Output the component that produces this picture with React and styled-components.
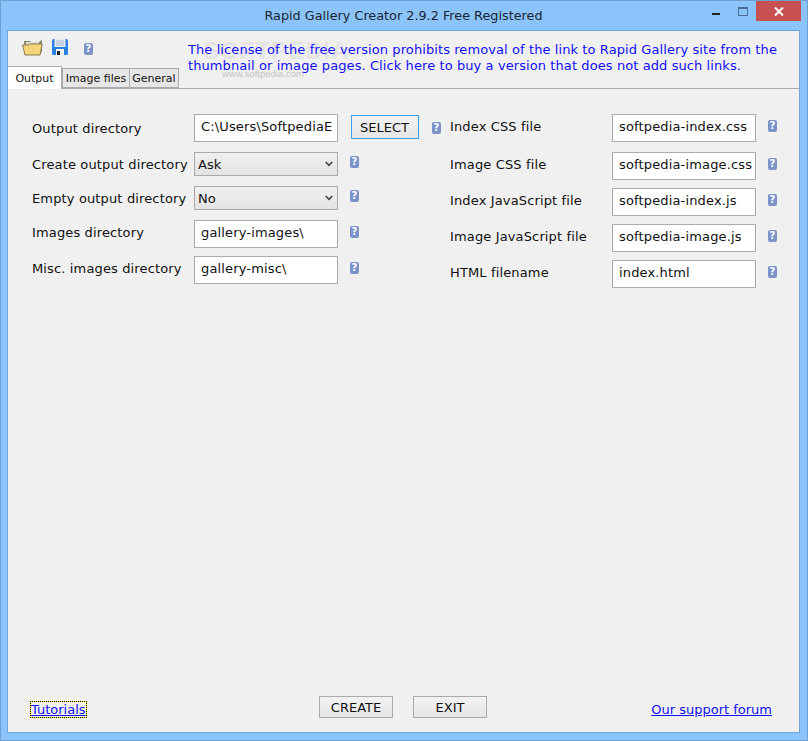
import styled, { createGlobalStyle } from "styled-components";

const GlobalStyle = createGlobalStyle`
    html, body {
        margin: 0;
        padding: 0;
        background: #8ac4fb;
    }
    * {
        box-sizing: border-box;
    }
`;

const Window = styled.div`
    width: 808px;
    height: 741px;
    display: flex;
    flex-direction: column;
    background: #8ac4fb;
    border: 1px solid #6f9fcf;
    padding: 0 7px 7px 6px;
    font-family: "DejaVu Sans", Verdana, sans-serif;
    font-size: 13px;
    color: #111;
    overflow: hidden;
`;

const TitleBar = styled.div`
    height: 29px;
    flex: none;
    position: relative;
    display: flex;
    align-items: center;
    justify-content: center;
    font-size: 12.8px;
    color: #1c2430;
`;

const Controls = styled.div`
    position: absolute;
    right: -1px;
    top: 0;
    display: flex;
    align-items: flex-start;
`;

const MinButton = styled.div`
    width: 8px;
    height: 2px;
    margin: 12px 18px 0 0;
    background: #222;
`;

const MaxButton = styled.div`
    width: 10px;
    height: 9px;
    margin: 6px 8px 0 0;
    border: 1px solid #4d6f93;
    border-top-width: 2px;
`;

const CloseButton = styled.div`
    width: 45px;
    height: 20px;
    background: #c75050;
    display: flex;
    align-items: center;
    justify-content: center;
`;

const Client = styled.div`
    flex: 1;
    position: relative;
    display: flex;
    flex-direction: column;
    background: #f0f0f0;
    border: 1px solid #6fa5d8;
`;

const Header = styled.div`
    height: 36px;
    flex: none;
    display: flex;
    position: relative;
`;

const Toolbar = styled.div`
    width: 180px;
    flex: none;
    display: flex;
    align-items: center;
    padding: 0 0 4px 14px;
`;

const ToolIcon = styled.svg`
    display: block;
    flex: none;
    margin-left: ${p => p.$left || 0}px;
`;

const Notice = styled.div`
    position: relative;
    color: #1010f5;
    font-size: 13px;
    line-height: 16px;
    letter-spacing: 0.09px;
    white-space: nowrap;
    padding-top: 11px;
`;

const WatermarkLogo = styled.div`
    position: absolute;
    left: 195px;
    top: 6px;
    color: #e4e4e4;
    font-family: "Liberation Sans", Arial, sans-serif;
    font-size: 24px;
    font-weight: bold;
    letter-spacing: 1px;
    pointer-events: none;
`;

const WatermarkUrl = styled.div`
    position: absolute;
    left: 214px;
    top: 37px;
    color: #c4c4c4;
    font-family: "Liberation Sans", Arial, sans-serif;
    font-size: 9.5px;
    pointer-events: none;
`;

const TabBar = styled.div`
    display: flex;
    height: 22px;
    flex: none;
    align-items: flex-end;
    border-bottom: 1px solid #aaaaaa;
    font-size: 11px;
`;

const Tab = styled.div`
    height: ${p => (p.$active ? "23px" : "20px")};
    width: ${p => p.$width}px;
    display: flex;
    align-items: center;
    justify-content: center;
    border: 1px solid #aaaaaa;
    border-left-width: ${p => (p.$active ? "0" : "1px")};
    border-bottom: ${p => (p.$active ? "none" : "1px solid #aaaaaa")};
    background: ${p => (p.$active ? "#ffffff" : "#e6e6e6")};
    margin-bottom: ${p => (p.$active ? "-1px" : "0")};
    margin-left: ${p => (p.$overlap ? "-1px" : "0")};
    position: relative;
`;

const Panel = styled.div`
    flex: 1;
    display: flex;
    flex-direction: column;
    justify-content: space-between;
    padding: 25px 22px 14px 24px;
`;

const Columns = styled.div`
    display: flex;
`;

const LeftColumn = styled.div`
    width: 418px;
    flex: none;
`;

const RightColumn = styled.div`
    flex: 1;
`;

const Row = styled.div`
    display: flex;
    align-items: center;
    margin-top: ${p => p.$gap || 0}px;
`;

const Label = styled.div`
    width: 162px;
    flex: none;
    white-space: nowrap;
    letter-spacing: 0.14px;
    margin-top: ${p => (p.$raised ? "-4px" : "0")};
`;

const TextField = styled.div`
    width: 144px;
    height: 28px;
    flex: none;
    background: #fff;
    border: 1px solid #aaaaaa;
    padding: 0 0 3px 6px;
    display: flex;
    align-items: center;
    white-space: nowrap;
    overflow: hidden;
    letter-spacing: 0.15px;
`;

const Select = styled.div`
    width: 144px;
    height: 24px;
    flex: none;
    border: 1px solid #aaaaaa;
    background: linear-gradient(#f0f0f0, #e3e3e3);
    padding: 0 4px 0 3px;
    display: flex;
    align-items: center;
    justify-content: space-between;
`;

const Help = styled.span`
    width: 9px;
    height: 12px;
    flex: none;
    margin-left: ${p => p.$left || 12}px;
    margin-top: ${p => p.$top || 0}px;
    border-radius: 2px;
    background: #7b93c8;
    color: #fff;
    font-size: 10px;
    font-weight: bold;
    line-height: 12px;
    text-align: center;
`;

const SelectButton = styled.div`
    width: 68px;
    height: 24px;
    flex: none;
    margin: -2px 0 0 13px;
    border: 1px solid #3c9cf0;
    background: linear-gradient(#f2f2f2, #e6e6e6);
    display: flex;
    align-items: center;
    justify-content: center;
    padding-right: 1px;
`;

const Footer = styled.div`
    display: grid;
    grid-template-columns: 287px 168px 1fr;
    align-items: center;
`;

const LinkText = styled.a`
    color: #1010f5;
    text-decoration: underline;
    justify-self: end;
    margin-right: 5px;
    white-space: nowrap;
    padding-top: 4px;
`;

const FocusLink = styled.a`
    justify-self: start;
    color: #1010f5;
    text-decoration: underline;
    white-space: nowrap;
    margin: 4px 0 0 -1px;
    outline: 1px dotted #000;
    box-shadow: 0 0 0 1px #ffff00;
`;

const Actions = styled.div`
    display: flex;
    gap: 20px;
`;

const ActionButton = styled.div`
    width: 74px;
    height: 22px;
    border: 1px solid #aaaaaa;
    background: linear-gradient(#f2f2f2, #e6e6e6);
    display: flex;
    align-items: center;
    justify-content: center;
`;

const Chevron = () => (
    <svg width="8" height="6" viewBox="0 0 8 6">
        <path d="M.7 1l3.3 3.3L7.3 1" fill="none" stroke="#444" strokeWidth="1.6" />
    </svg>
);

const FolderIcon = () => (
    <ToolIcon width="21" height="17" viewBox="0 0 21 17">
        <path d="M2 2h6l1 1h8l3-2v11l-2 4H3z" fill="#857f66" />
        <path d="M4 3h13v4H4z" fill="#dedccb" />
        <path d="M.6 6h6l1-1h12.6L18 16H3z" fill="#f6d57a" stroke="#8a7a50" strokeWidth="1" />
    </ToolIcon>
);

const SaveIcon = () => (
    <ToolIcon $left={9} width="16" height="16" viewBox="0 0 16 16">
        <rect x="0" y="0" width="16" height="16" rx="1.5" fill="#2c7fe6" />
        <rect x="2.5" y="0" width="11" height="8" fill="#e4e9f2" />
        <path d="M4 2h8M4 4h8M4 6h8" stroke="#a9bcd8" strokeWidth="1" />
        <rect x="4" y="10" width="8" height="6" fill="#f3f3f3" />
        <rect x="5" y="12" width="3" height="4" fill="#222" />
    </ToolIcon>
);

const CloseIcon = () => (
    <svg width="10" height="9" viewBox="0 0 10 9">
        <path d="M1 .5l8 8M9 .5l-8 8" stroke="#fff" strokeWidth="2" />
    </svg>
);

const leftRows = [
    { label: "Create output directory", select: "Ask", gap: 10 },
    { label: "Empty output directory", select: "No", gap: 10 },
    { label: "Images directory", value: "gallery-images\\", gap: 10 },
    { label: "Misc. images directory", value: "gallery-misc\\", gap: 8 },
];

const rightRows = [
    { label: "Index CSS file", value: "softpedia-index.css", gap: 0 },
    { label: "Image CSS file", value: "softpedia-image.css", gap: 10 },
    { label: "Index JavaScript file", value: "softpedia-index.js", gap: 8 },
    { label: "Image JavaScript file", value: "softpedia-image.js", gap: 8 },
    { label: "HTML filename", value: "index.html", gap: 8 },
];

export default function App() {
    return (
        <Window>
            <GlobalStyle />
            <TitleBar>
                Rapid Gallery Creator 2.9.2 Free Registered
                <Controls>
                    <MinButton />
                    <MaxButton />
                    <CloseButton><CloseIcon /></CloseButton>
                </Controls>
            </TitleBar>
            <Client>
                <Header>
                    <WatermarkLogo>SOFTPEDIA</WatermarkLogo>
                    <WatermarkUrl>www.softpedia.com</WatermarkUrl>
                    <Toolbar>
                        <FolderIcon />
                        <SaveIcon />
                        <Help $left={16} $top={4}>?</Help>
                    </Toolbar>
                    <Notice>
                        The license of the free version prohibits removal of the link to Rapid Gallery site from the<br />
                        thumbnail or image pages. Click here to buy a version that does not add such links.
                    </Notice>
                </Header>
                <TabBar>
                    <Tab $active $width={54}>Output</Tab>
                    <Tab $width={68}>Image files</Tab>
                    <Tab $width={50} $overlap>General</Tab>
                </TabBar>
                <Panel>
                    <Columns>
                        <LeftColumn>
                            <Row>
                                <Label>Output directory</Label>
                                <TextField>C:\Users\SoftpediaE</TextField>
                                <SelectButton>SELECT</SelectButton>
                                <Help $left={13}>?</Help>
                            </Row>
                            {leftRows.map(row => (
                                <Row key={row.label} $gap={row.gap}>
                                    <Label $raised={!row.select}>{row.label}</Label>
                                    {row.select ? (
                                        <Select>{row.select}<Chevron /></Select>
                                    ) : (
                                        <TextField>{row.value}</TextField>
                                    )}
                                    <Help $top={-4}>?</Help>
                                </Row>
                            ))}
                        </LeftColumn>
                        <RightColumn>
                            {rightRows.map(row => (
                                <Row key={row.label} $gap={row.gap}>
                                    <Label $raised>{row.label}</Label>
                                    <TextField>{row.value}</TextField>
                                    <Help $top={-4}>?</Help>
                                </Row>
                            ))}
                        </RightColumn>
                    </Columns>
                    <Footer>
                        <FocusLink>Tutorials</FocusLink>
                        <Actions>
                            <ActionButton>CREATE</ActionButton>
                            <ActionButton>EXIT</ActionButton>
                        </Actions>
                        <LinkText>Our support forum</LinkText>
                    </Footer>
                </Panel>
            </Client>
        </Window>
    );
}
